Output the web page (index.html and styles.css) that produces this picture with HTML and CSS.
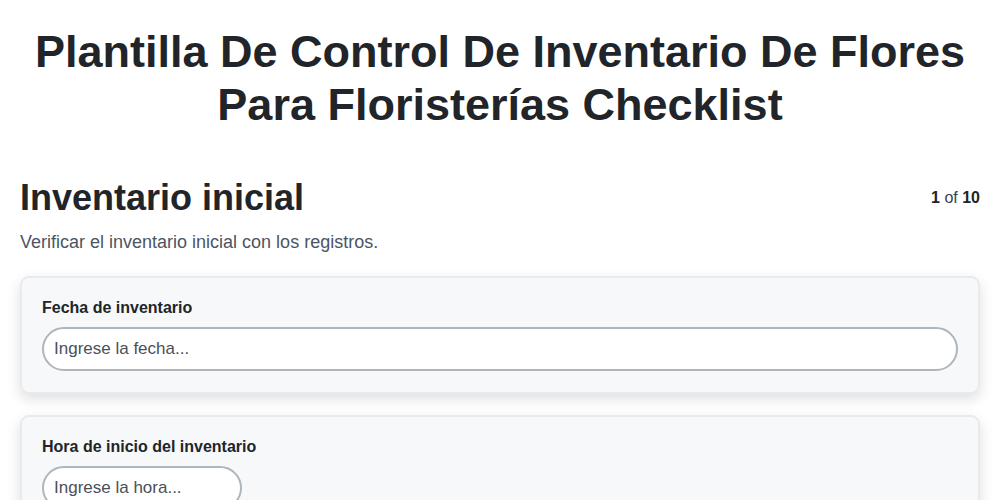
FILE: index.html
```html
<!DOCTYPE html>
<html lang="es">

<head>
    <meta charset="UTF-8">
    <meta name="viewport" content="width=device-width, initial-scale=1.0">
    <title>Plantilla De Control De Inventario De Flores Para Floristerías Checklist</title>
    <link rel="stylesheet" href="styles.css">
</head>

<body>
    <div class="page">
        <h1 class="page-title">Plantilla De Control De Inventario De Flores Para Floristerías Checklist</h1>

        <div class="step">
            <div class="step-header">
                <h2 class="step-title">Inventario inicial</h2>
                <span class="step-count"><b>1</b> of <b>10</b></span>
            </div>
            <p class="step-desc">Verificar el inventario inicial con los registros.</p>

            <div class="field-card">
                <label class="field-label" for="fecha">Fecha de inventario</label>
                <input class="field-input" type="text" id="fecha" placeholder="Ingrese la fecha...">
            </div>

            <div class="field-card">
                <label class="field-label" for="hora">Hora de inicio del inventario</label>
                <input class="field-input field-short" type="text" id="hora" placeholder="Ingrese la hora...">
            </div>
        </div>
    </div>
</body>

</html>
```

FILE: styles.css
```css
* {
    margin: 0;
    padding: 0;
    box-sizing: border-box;
    font-family: "Liberation Sans", Arial, sans-serif;
}

body {
    background-color: #fff;
    color: #212529;
}

.page {
    padding: 25px 20px 20px;
}

.page-title {
    font-size: 45px;
    line-height: 53px;
    font-weight: bold;
    text-align: center;
    color: #212529;
    margin-bottom: 45px;
}

.step-header {
    display: flex;
    justify-content: space-between;
    align-items: center;
    margin-bottom: 13px;
}

.step-title {
    font-size: 36px;
    line-height: 1.2;
    font-weight: bold;
    color: #212529;
}

.step-count {
    font-size: 16px;
    color: #374151;
}

.step-count b {
    color: #212529;
}

.step-desc {
    font-size: 18px;
    color: #4b5563;
    margin-bottom: 23px;
}

.field-card {
    background-color: #f7f8fa;
    border: 2px solid #e8eaee;
    border-radius: 9px;
    padding: 21px 20px;
    margin-bottom: 21px;
    box-shadow: 0 5px 14px rgba(0, 0, 0, 0.13);
}

.field-label {
    display: block;
    font-size: 16px;
    font-weight: bold;
    color: #212529;
    margin-bottom: 10px;
}

.field-input {
    display: block;
    width: 100%;
    font-size: 17px;
    padding: 10px 10px;
    border: 2px solid #adb5bd;
    border-radius: 22px;
    background-color: #fff;
    color: #212529;
    outline: none;
}

.field-input::placeholder {
    color: #4b5058;
    opacity: 1;
}

.field-short {
    width: 200px;
}
```
